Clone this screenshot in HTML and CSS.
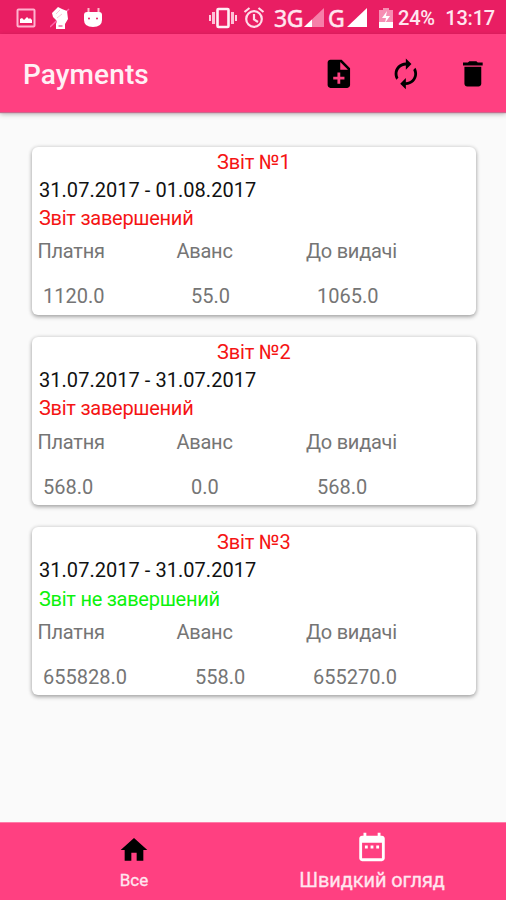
FILE: index.html
```html
<!DOCTYPE html>
<html lang="uk">
<head>
<meta charset="utf-8">
<title>Payments</title>
<link rel="stylesheet" href="styles.css">
</head>
<body>
<div class="status">
  <svg class="s-image" width="20" height="20" viewBox="0 0 20 20"><rect x="1.5" y="1.5" width="17" height="17" rx="1" fill="none" stroke="#ffb3cf" stroke-width="2"/><path d="M4 15v-4l2-1 2 2 3-3 2 2 1-1 2 2v3z" fill="#fff"/></svg>
  <svg class="s-fist" width="20" height="24" viewBox="0 0 20 24"><path d="M0 21L19 3" stroke="#f6a" stroke-width="1.5"/><path d="M2 7l6-6 4 2 5 2 1 8-3 5v5H6v-5l1-3-4-4z" fill="#fff"/><path d="M6 8l4-4M7 12l5-4" stroke="#fbc4d8" stroke-width="1"/><rect x="8.500" y="19" width="4" height="2" fill="#f48ab4"/></svg>
  <svg class="s-droid" width="18" height="22" viewBox="0 0 18 22"><path d="M4.500 7V1M14.500 7V1" stroke="#fbc" stroke-width="2"/><path d="M0 8q0-3 3-3h12q3 0 3 3v5q0 7-9 7t-9-7z" fill="#fff"/><circle cx="5" cy="11.500" r="1" fill="#e91e63"/><circle cx="13" cy="11.500" r="1" fill="#e91e63"/></svg>
  <svg class="s-vibrate" width="28" height="22" viewBox="0 0 28 22"><path d="M1 8v6M27 8v6" stroke="#ffd0e1" stroke-width="2"/><path d="M4.500 5v12M23.500 5v12" stroke="#ffc0d7" stroke-width="3"/><rect x="8.500" y="2" width="11" height="18" rx="1" fill="none" stroke="#fff0f6" stroke-width="2.600"/></svg>
  <svg class="s-alarm" width="22" height="22" viewBox="0 0 22 22"><g fill="none" stroke="#ffdce9" stroke-width="2.200"><circle cx="11" cy="12" r="7.800"/><path d="M11 7v5.500l4 2.500M1.500 5l5-4M20.500 5l-5-4"/></g></svg>
  <span class="net net-3g">3G</span>
  <svg class="s-sig1" width="20" height="19" viewBox="0 0 20 19"><path d="M0 19L20 0v19z" fill="#f67fa9"/><path d="M0 19l8-7.600V19z" fill="#fff"/></svg>
  <span class="net net-g">G</span>
  <svg class="s-sig2" width="20" height="19" viewBox="0 0 20 19"><path d="M0 19L20 0v19z" fill="#fff"/></svg>
  <svg class="s-battery" width="14" height="20" viewBox="0 0 14 20"><path d="M4 0h6v2h4v12H0V2h4z" fill="#f68eb3"/><path d="M0 14h14v6H0z" fill="#fff"/><path d="M8 3l-5 7h4l-1 5 5-7H7z" fill="#fff"/></svg>
  <span class="pct">24%</span>
  <span class="time">13:17</span>
</div>
<header class="bar">
  <h1>Payments</h1>
  <div class="actions">
    <svg class="icon" viewBox="0 0 24 24"><path d="M14 2H6c-1.100 0-1.990.9-1.990 2L4 20c0 1.100.89 2 1.990 2H18c1.100 0 2-.9 2-2V8l-6-6zm2 14h-3v3h-2v-3H8v-2h3v-3h2v3h3v2zm-3-7V3.500L18.500 9H13z"/></svg>
    <svg class="icon" viewBox="0 0 24 24"><path d="M12 6v3l4-4-4-4v3c-4.420 0-8 3.580-8 8 0 1.570.46 3.030 1.240 4.260L6.700 14.800c-.45-.83-.7-1.790-.7-2.800 0-3.310 2.690-6 6-6zm6.760 1.740L17.300 9.200c.44.840.7 1.790.7 2.800 0 3.310-2.690 6-6 6v-3l-4 4 4 4v-3c4.420 0 8-3.580 8-8 0-1.570-.46-3.030-1.240-4.260z"/></svg>
    <svg class="icon" viewBox="0 0 24 24"><path d="M6 19c0 1.100.9 2 2 2h8c1.100 0 2-.9 2-2V7H6v12zM19 4h-3.500l-1-1h-5l-1 1H5v2h14V4z"/></svg>
  </div>
</header>
<main class="list">
  <article class="card">
    <h2>Звіт №1</h2>
    <p class="dates">31.07.2017 - 01.08.2017</p>
    <p class="state done">Звіт завершений</p>
    <div class="cols head"><span>Платня</span><span>Аванс</span><span>До видачі</span></div>
    <div class="cols vals"><span>1120.0</span><span>55.0</span><span>1065.0</span></div>
  </article>
  <article class="card">
    <h2>Звіт №2</h2>
    <p class="dates">31.07.2017 - 31.07.2017</p>
    <p class="state done">Звіт завершений</p>
    <div class="cols head"><span>Платня</span><span>Аванс</span><span>До видачі</span></div>
    <div class="cols vals"><span>568.0</span><span>0.0</span><span>568.0</span></div>
  </article>
  <article class="card">
    <h2>Звіт №3</h2>
    <p class="dates">31.07.2017 - 31.07.2017</p>
    <p class="state open">Звіт не завершений</p>
    <div class="cols head"><span>Платня</span><span>Аванс</span><span>До видачі</span></div>
    <div class="cols vals wide"><span>655828.0</span><span>558.0</span><span>655270.0</span></div>
  </article>
</main>
<nav class="tabs">
  <div class="tab all">
    <svg viewBox="0 0 24 24"><path d="M10 20v-6h4v6h5v-8h3L12 3 2 12h3v8z"/></svg>
    <span>Все</span>
  </div>
  <div class="tab quick">
    <svg viewBox="0 0 24 24"><path d="M9 11H7v2h2v-2zm4 0h-2v2h2v-2zm4 0h-2v2h2v-2zm2-7h-1V2h-2v2H8V2H6v2H5c-1.110 0-1.990.9-1.990 2L3 20c0 1.100.89 2 2 2h14c1.100 0 2-.9 2-2V6c0-1.100-.9-2-2-2zm0 16H5V9h14v11z"/></svg>
    <span>Швидкий огляд</span>
  </div>
</nav>
</body>
</html>
```
FILE: styles.css
```css
* { box-sizing: border-box; margin: 0; padding: 0; }
body {
  width: 506px;
  height: 900px;
  display: flex;
  flex-direction: column;
  overflow: hidden;
  background: #fafafa;
  font-family: Roboto, "Liberation Sans", sans-serif;
  font-size: 20px;
}
svg { display: block; flex: none; }

.status {
  height: 34px;
  flex: none;
  display: flex;
  align-items: center;
  padding: 1px 11px 0 16px;
  background: #e91e63;
  color: #ffe6ef;
  white-space: nowrap;
}
.s-fist { margin-left: 14px; }
.s-droid { margin-left: 14px; }
.s-vibrate { margin-left: 107px; }
.s-alarm { margin-left: 6px; }
.net { font-family: "Noto Sans", sans-serif; font-size: 23px; line-height: 32px; -webkit-text-stroke: .5px #ffe6ef; }
.net-3g { margin-left: 9px; width: 28px; letter-spacing: -.5px; }
.s-sig1 { margin-left: 2px; }
.net-g { margin-left: 4px; width: 17px; }
.s-sig2 { margin-left: 2px; }
.s-battery { margin-left: 12px; }
.pct, .time { font-weight: 500; font-size: 20px; }
.pct { margin-left: 5px; width: 37px; letter-spacing: -.2px; }
.time { margin-left: auto; letter-spacing: -.2px; }

.bar {
  height: 78px;
  flex: none;
  display: flex;
  align-items: center;
  justify-content: space-between;
  padding: 2px 16px 0 23px;
  background: #ff4081;
  box-shadow: 0 1px 1px #c86a8e, 0 2px 5px rgba(0, 0, 0, .3);
}
.bar h1 { color: #fff0f5; font-size: 28px; font-weight: 500; line-height: 36px; padding-top: 2px; letter-spacing: .1px; }
.actions { display: flex; gap: 33.700px; }
.icon { width: 33.700px; height: 33.700px; }

.list { flex: 1; display: flex; flex-direction: column; gap: 22.300px; padding: 34.500px 30px 0 31.500px; }
.card {
  height: 168px;
  flex: none;
  padding: 1.200px 7px 0;
  border-radius: 6px;
  background: #fff;
  box-shadow: 0 2px 4px rgba(0, 0, 0, .3), 0 0 4px rgba(0, 0, 0, .14);
}
.card h2, .dates, .state { height: 28.200px; line-height: 28.200px; font-size: 20px; font-weight: 400; }
.card h2 { text-align: center; color: #f51414; letter-spacing: -.15px; }
.dates { padding-left: .5px; color: #111; letter-spacing: .04px; }
.state { padding-left: .5px; letter-spacing: -.27px; }
.done { color: #f51414; }
.open { color: #0cf20c; }
.cols { display: grid; grid-template-columns: 139px 129.500px 1fr; color: #757575; line-height: 28px; }
.head { margin: 5px 0 0 -1px; letter-spacing: -.25px; }
.vals { margin: 17px 0 0 -.5px; }
.vals span:nth-child(1) { padding-left: 5px; }
.vals span:nth-child(2) { padding-left: 14px; }
.vals span:nth-child(3) { padding-left: 10.500px; }
.wide span:nth-child(2) { padding-left: 18px; }
.wide span:nth-child(3) { padding-left: 6.500px; }

.tabs { height: 78px; flex: none; display: flex; background: #ff4081; border-top: 1px solid #ff7ca8; color: #ffe6ef; }
.tab { display: flex; flex-direction: column; align-items: center; white-space: nowrap; }
.all { width: 268px; padding-top: 11px; font-size: 17px; }
.all svg { width: 32px; height: 32px; }
.all span { line-height: 20px; margin-top: 4px; -webkit-text-stroke: .3px #ffe6ef; }
.quick { width: 208px; padding-top: 7px; font-size: 20px; }
.quick svg { width: 34px; height: 34px; fill: #fff; }
.quick span { line-height: 24px; margin-top: 4px; -webkit-text-stroke: .3px #ffe6ef; letter-spacing: -.08px; }
```
